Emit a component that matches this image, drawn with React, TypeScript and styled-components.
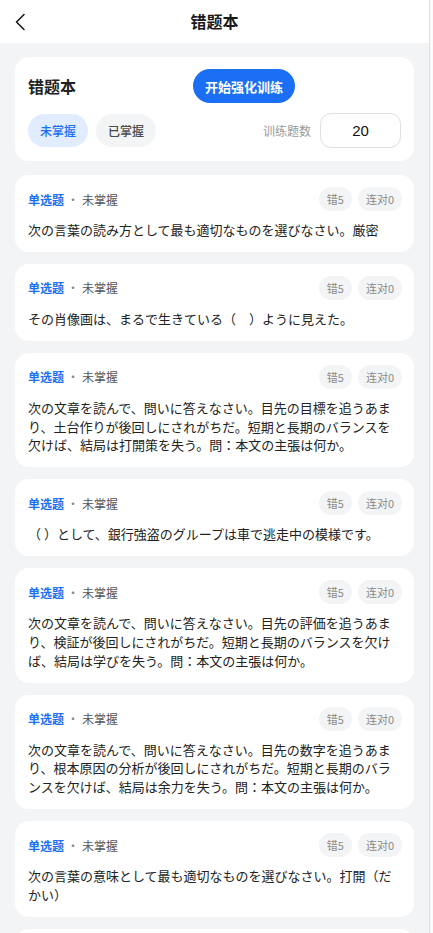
import React from "react";
import styled, { createGlobalStyle } from "styled-components";

const GlobalStyle = createGlobalStyle`
  html, body { margin: 0; padding: 0; background: #fbfbfc; }
  body { font-family: "Noto Sans CJK SC", "Noto Sans", sans-serif; -webkit-font-smoothing: antialiased; }
  * { box-sizing: border-box; }
`;

const Page = styled.div`
  width: 430px;
  min-height: 933px;
  background: #f3f4f6;
  border-right: 1px solid #dcdde0;
`;

const Header = styled.header`
  height: 43px;
  background: #ffffff;
  display: flex;
  align-items: center;
  justify-content: center;
  position: relative;
`;

const BackButton = styled.button`
  position: absolute;
  left: 8px;
  top: 10px;
  width: 24px;
  height: 24px;
  padding: 0;
  border: none;
  background: transparent;
  display: flex;
  align-items: center;
  justify-content: center;
`;

const HeaderTitle = styled.h1`
  margin: 0 0 2px;
  font-size: 16px;
  font-weight: 700;
  color: #1a1a1a;
`;

const Content = styled.main`
  padding: 14px 15px;
  display: flex;
  flex-direction: column;
  gap: 12px;
`;

const Panel = styled.section`
  background: #ffffff;
  border-radius: 14px;
  padding: 12px 13px 13px;
  display: flex;
  flex-direction: column;
  gap: 10px;
  margin-bottom: 2px;
`;

const PanelTop = styled.div`
  display: flex;
  align-items: center;
`;

const PanelTitle = styled.h2`
  margin: 0;
  width: 48px;
  font-size: 16px;
  font-weight: 700;
  color: #222;
`;

const PrimaryButton = styled.button`
  margin-left: 117px;
  height: 34px;
  padding: 0 12px;
  border: none;
  border-radius: 17px;
  background: #1a6ff5;
  color: #fff;
  font-family: inherit;
  font-size: 13px;
  font-weight: 700;
`;

const PanelBottom = styled.div`
  display: flex;
  align-items: center;
  gap: 8px;
`;

const FilterChip = styled.button<{ $active?: boolean }>`
  height: 33px;
  padding: 0 12px;
  border: none;
  border-radius: 17px;
  font-family: inherit;
  font-size: 12px;
  font-weight: 500;
  background: ${(p) => (p.$active ? "#e1ecff" : "#f3f4f6")};
  color: ${(p) => (p.$active ? "#1a6ff5" : "#4a4a4a")};
`;

const CountLabel = styled.span`
  margin-left: auto;
  font-size: 12px;
  color: #999;
`;

const CountInput = styled.div`
  width: 81px;
  height: 35px;
  margin-left: 1px;
  border: 1px solid #dedfe2;
  border-radius: 11px;
  display: flex;
  align-items: center;
  justify-content: center;
  font-family: "Liberation Sans", Arial, sans-serif;
  font-size: 15px;
  color: #111;
`;

const Card = styled.article`
  background: #ffffff;
  border-radius: 14px;
  padding: 12px 12px 12px 13px;
  display: flex;
  flex-direction: column;
  gap: 10px;
`;

const CardHead = styled.div`
  display: flex;
  align-items: center;
  height: 24px;
`;

const TypeLabel = styled.span`
  font-size: 12px;
  font-weight: 700;
  color: #1a6ff5;
`;

const Dot = styled.span`
  margin: 0 3px;
  font-size: 12px;
  color: #888;
`;

const StatusLabel = styled.span`
  font-size: 12px;
  color: #555;
`;

const Stats = styled.div`
  margin-left: auto;
  display: flex;
  gap: 6px;
`;

const StatChip = styled.span`
  height: 24px;
  padding: 0 8px;
  border-radius: 12px;
  background: #f3f4f6;
  color: #8a8a8a;
  font-size: 11px;
  display: flex;
  align-items: center;
`;

const Question = styled.p`
  margin: 0;
  width: 374px;
  font-family: "Noto Sans CJK JP", "Noto Sans", sans-serif;
  font-size: 13px;
  line-height: 18.85px;
  color: #222;
  text-spacing-trim: space-all;
  white-space: pre-wrap;
`;

const questions = [
  "次の言葉の読み方として最も適切なものを選びなさい。厳密",
  "その肖像画は、まるで生きている（\u3000）ように見えた。",
  "次の文章を読んで、問いに答えなさい。目先の目標を追うあまり、土台作りが後回しにされがちだ。短期と長期のバランスを欠けば、結局は打開策を失う。問：本文の主張は何か。",
  "（ ）として、銀行強盗のグループは車で逃走中の模様です。",
  "次の文章を読んで、問いに答えなさい。目先の評価を追うあまり、検証が後回しにされがちだ。短期と長期のバランスを欠けば、結局は学びを失う。問：本文の主張は何か。",
  "次の文章を読んで、問いに答えなさい。目先の数字を追うあまり、根本原因の分析が後回しにされがちだ。短期と長期のバランスを欠けば、結局は余力を失う。問：本文の主張は何か。",
  "次の言葉の意味として最も適切なものを選びなさい。打開（だかい）",
  "次の言葉の読み方として最も適切なものを選びなさい。",
];

export default function App() {
  return (
    <>
      <GlobalStyle />
      <Page>
        <Header>
          <BackButton aria-label="返回">
            <svg width="12" height="18" viewBox="0 0 12 18" fill="none">
              <path d="M10 1.5 L2.5 9 L10 16.5" stroke="#1a1a1a" strokeWidth="1.6" strokeLinecap="round" strokeLinejoin="round" />
            </svg>
          </BackButton>
          <HeaderTitle>错题本</HeaderTitle>
        </Header>
        <Content>
          <Panel>
            <PanelTop>
              <PanelTitle>错题本</PanelTitle>
              <PrimaryButton>开始强化训练</PrimaryButton>
            </PanelTop>
            <PanelBottom>
              <FilterChip $active>未掌握</FilterChip>
              <FilterChip>已掌握</FilterChip>
              <CountLabel>训练题数</CountLabel>
              <CountInput>20</CountInput>
            </PanelBottom>
          </Panel>
          {questions.map((q, i) => (
            <Card key={i}>
              <CardHead>
                <TypeLabel>单选题</TypeLabel>
                <Dot>·</Dot>
                <StatusLabel>未掌握</StatusLabel>
                <Stats>
                  <StatChip>错5</StatChip>
                  <StatChip>连对0</StatChip>
                </Stats>
              </CardHead>
              <Question>{q}</Question>
            </Card>
          ))}
        </Content>
      </Page>
    </>
  );
}
